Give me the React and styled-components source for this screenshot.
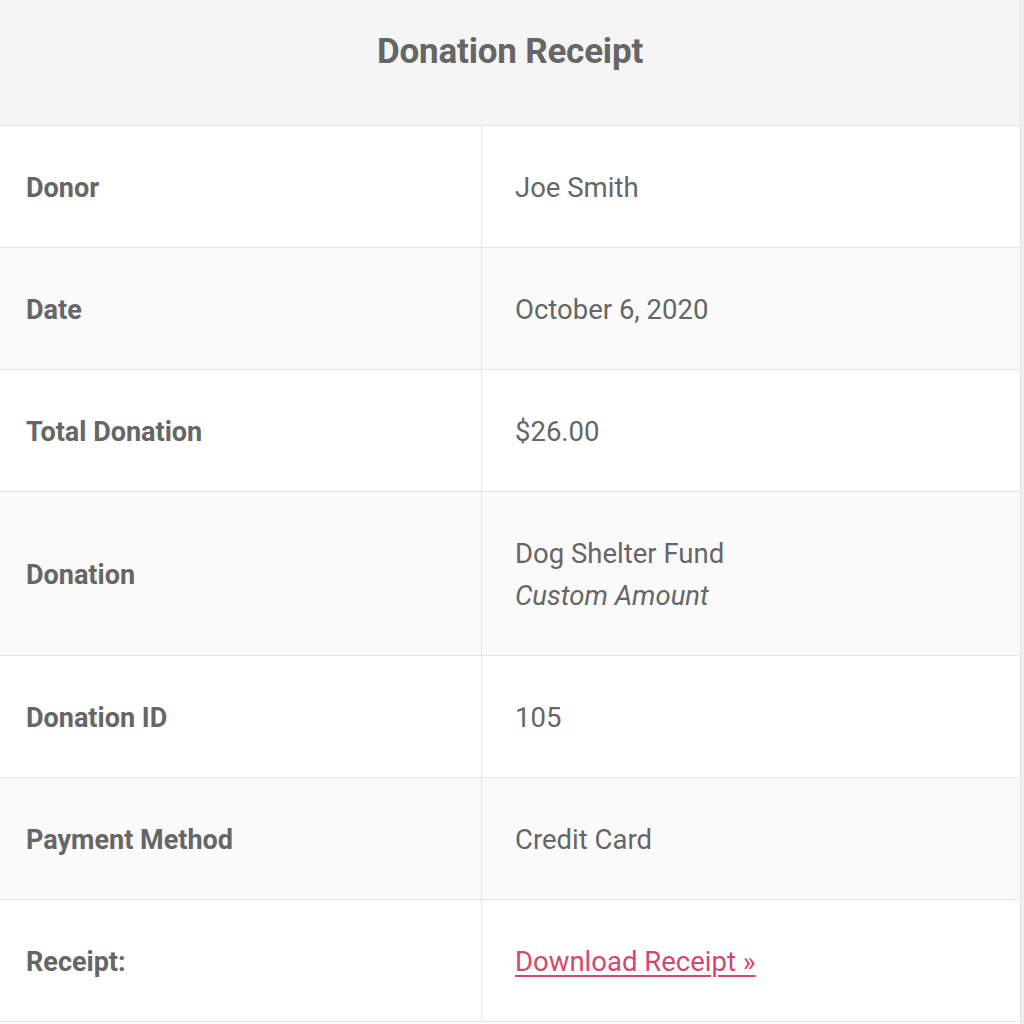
import React from "react";
import styled, { createGlobalStyle } from "styled-components";

const GlobalStyle = createGlobalStyle`
  html, body {
    margin: 0;
    padding: 0;
    background-color: #f7ede7;
  }

  body {
    font-family: "Roboto", "Liberation Sans", sans-serif;
    color: #666666;
  }
`;

const Receipt = styled.div`
  width: 1021px;
  height: 1024px;
  overflow: hidden;
  background-color: #ffffff;
  border-right: 1px solid #e6e6e6;
  box-sizing: border-box;
`;

const Header = styled.h2`
  margin: 0;
  padding: 28px 0 49px;
  background-color: #f5f5f5;
  border-bottom: 1px solid #e4e4e4;

  font-size: 35px;
  font-weight: 700;
  line-height: 48px;
  letter-spacing: -0.2px;
  text-align: center;
  color: #666666;
`;

const Row = styled.div`
  display: grid;
  grid-template-columns: 482px 1fr;
  background-color: ${(props) => (props.$striped ? "#fafafa" : "#ffffff")};
  border-bottom: 1px solid #e4e4e4;
`;

const Label = styled.div`
  display: flex;
  align-items: center;
  padding: 41px 26px 38px;

  font-size: 27px;
  font-weight: 700;
  line-height: 42px;
  border-right: 1px solid #e4e4e4;
`;

const Value = styled.div`
  display: flex;
  flex-direction: column;
  justify-content: center;
  padding: 41px 33px 38px;

  font-size: 27.5px;
  font-weight: 400;
  line-height: 42px;
`;

const Note = styled.em`
  font-style: italic;
`;

const ReceiptLink = styled.a`
  color: #d6476f;
  text-decoration: underline;
  text-underline-offset: 4px;
  text-decoration-thickness: 2px;
`;

const rows = [
  { label: "Donor", value: "Joe Smith" },
  { label: "Date", value: "October 6, 2020" },
  { label: "Total Donation", value: "$26.00" },
  {
    label: "Donation",
    value: (
      <>
        <span>Dog Shelter Fund</span>
        <Note>Custom Amount</Note>
      </>
    ),
  },
  { label: "Donation ID", value: "105" },
  { label: "Payment Method", value: "Credit Card" },
  {
    label: "Receipt:",
    value: (
      <span>
        <ReceiptLink href="#receipt">Download Receipt »</ReceiptLink>
      </span>
    ),
  },
];

export default function App() {
  return (
    <>
      <GlobalStyle />
      <Receipt>
        <Header>Donation Receipt</Header>
        {rows.map((row, i) => (
          <Row key={row.label} $striped={i % 2 === 1}>
            <Label>{row.label}</Label>
            <Value>{row.value}</Value>
          </Row>
        ))}
      </Receipt>
    </>
  );
}
